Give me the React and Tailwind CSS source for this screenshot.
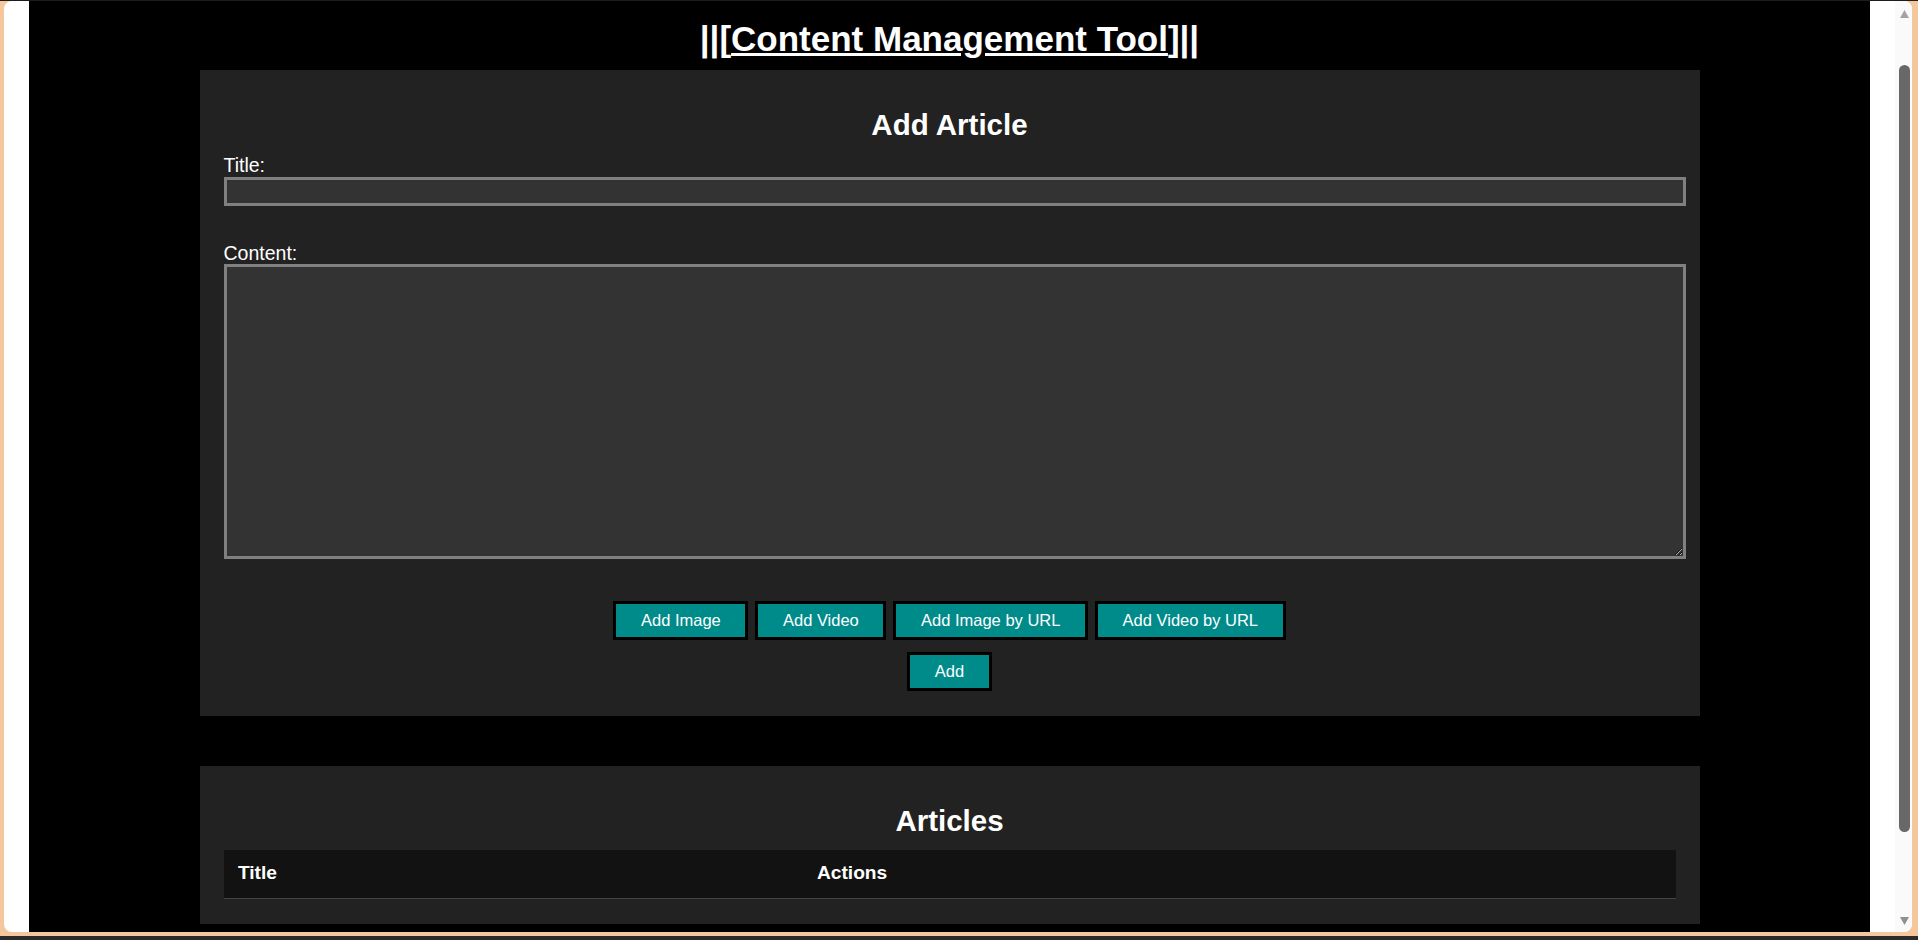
import React from "react";

function Btn({ children }) {
  return (
    <button
      type="button"
      className="h-[39px] px-[24.6px] border-[3px] border-black bg-[#008b8b] text-white text-[16.5px] leading-[19px] font-['Liberation_Sans',Arial,sans-serif]"
    >
      {children}
    </button>
  );
}

export default function App() {
  return (
    <div className="w-[1918px] h-[940px] bg-[#f4c89c] flex flex-col overflow-hidden font-['Liberation_Sans',Arial,sans-serif]">
      <div className="h-px bg-[#1e1c1a]" />
      <div className="flex-1 flex pl-[4px] pr-[6px] pb-[4px] min-h-0">
        <div className="flex-1 flex bg-white rounded-[8px] overflow-hidden">
          <div className="w-[25px] shrink-0" />
          <main className="w-[1841px] shrink-0 bg-black flex flex-col items-center overflow-hidden text-white">
            <h1 className="mt-[15px] mb-[14px] h-[40px] text-[35px] leading-[46px] font-bold">
              ||[<span className="underline">Content Management Tool</span>]||
            </h1>

            <section className="w-[1500px] bg-[#222222] px-[24px] pt-[24px] pb-[25px] flex flex-col shrink-0">
              <h2 className="mt-[11px] h-[33px] text-center text-[29.5px] leading-[39px] font-bold">Add Article</h2>
              <label className="block mt-[14px] h-[22px] text-[19.5px] leading-[27px]">Title:</label>
              <input
                type="text"
                className="mt-[3px] w-[1462px] h-[29px] bg-[#333333] border-[3px] border-[#808080] text-white outline-none"
              />
              <label className="block mt-[34px] h-[22px] text-[19.5px] leading-[27px]">Content:</label>
              <textarea className="mt-[2px] w-[1462px] h-[295px] bg-[#333333] border-[3px] border-[#808080] text-white outline-none resize" />
              <div className="mt-[42px] flex justify-center gap-[7px]">
                <Btn>Add Image</Btn>
                <Btn>Add Video</Btn>
                <Btn>Add Image by URL</Btn>
                <Btn>Add Video by URL</Btn>
              </div>
              <div className="mt-[12px] flex justify-center">
                <Btn>Add</Btn>
              </div>
            </section>

            <section className="mt-[50px] w-[1500px] bg-[#222222] px-[24px] pt-[24px] pb-[25px] flex flex-col shrink-0">
              <h2 className="mt-[11px] h-[33px] text-center text-[29.5px] leading-[39px] font-bold">Articles</h2>
              <table className="mt-[16px] w-full border-collapse">
                <thead>
                  <tr className="bg-[#121212] border-b border-[#444444]">
                    <th className="w-[579px] text-left px-[14.4px] pt-[13px] pb-[15px] text-[19.2px] leading-[20px] font-bold">
                      Title
                    </th>
                    <th className="text-left px-[14.4px] pt-[13px] pb-[15px] text-[19.2px] leading-[20px] font-bold">
                      Actions
                    </th>
                  </tr>
                </thead>
                <tbody />
              </table>
            </section>
          </main>
          <div className="w-[25px] shrink-0" />
          <div className="w-[17px] shrink-0 bg-[#fafafa] flex flex-col items-center pl-[3px] pr-[1px] pt-[9px] pb-[7px]">
            <svg width="9" height="8" viewBox="0 0 9 8">
              <polygon points="4.5,0 9,8 0,8" fill="#a3a3a3" />
            </svg>
            <div className="mt-[47px] w-[11px] h-[767px] rounded-full bg-[#686868]" />
            <div className="flex-1" />
            <svg width="9" height="8" viewBox="0 0 9 8">
              <polygon points="0,0 9,0 4.5,8" fill="#8f8f8f" />
            </svg>
          </div>
        </div>
      </div>
      <div className="h-[4px] bg-[#2b2b2b]" />
    </div>
  );
}
